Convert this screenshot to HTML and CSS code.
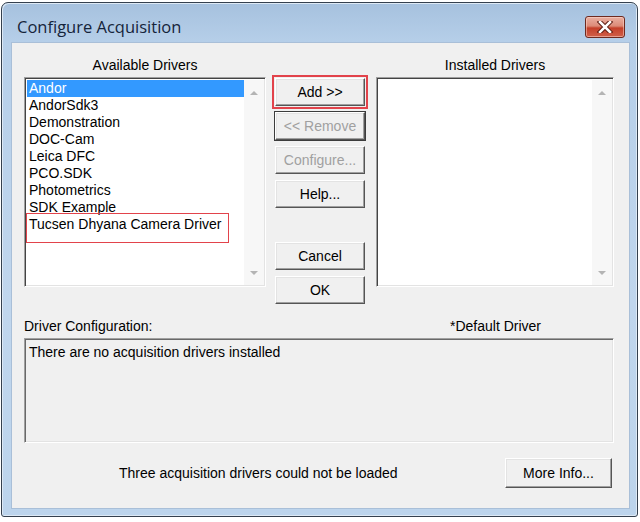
FILE: index.html
```html
<!DOCTYPE html>
<html lang="en">
<head>
    <meta charset="UTF-8">
    <title>Configure Acquisition</title>
    <link rel="stylesheet" href="styles.css">
</head>
<body>
    <div class="window">
        <div class="titlebar">
            <span class="title">Configure Acquisition</span>
            <span class="close-btn">
                <svg width="18" height="12" viewBox="0 0 18 12">
                    <path d="M4 1 L14 11 M14 1 L4 11" stroke="#5a1a10" stroke-width="4.5" stroke-linecap="square"/>
                    <path d="M4 1 L14 11 M14 1 L4 11" stroke="#fff" stroke-width="2.5" stroke-linecap="square"/>
                </svg>
            </span>
        </div>

        <div class="client">
            <div class="top-row">
                <div class="col-left">
                    <div class="group-label">Available Drivers</div>
                    <div class="listbox">
                        <ul class="items">
                            <li class="selected">Andor</li>
                            <li>AndorSdk3</li>
                            <li>Demonstration</li>
                            <li>DOC-Cam</li>
                            <li>Leica DFC</li>
                            <li>PCO.SDK</li>
                            <li>Photometrics</li>
                            <li>SDK Example</li>
                            <li>Tucsen Dhyana Camera Driver</li>
                        </ul>
                        <span class="mark"></span>
                        <div class="scrollbar">
                            <span class="arrow-up"></span>
                            <span class="arrow-down"></span>
                        </div>
                    </div>
                </div>

                <div class="buttons">
                    <button class="btn marked">Add &gt;&gt;</button>
                    <button class="btn focus" disabled>&lt;&lt; Remove</button>
                    <button class="btn" disabled>Configure...</button>
                    <button class="btn">Help...</button>
                    <button class="btn spaced">Cancel</button>
                    <button class="btn">OK</button>
                </div>

                <div class="col-right">
                    <div class="group-label">Installed Drivers</div>
                    <div class="listbox">
                        <ul class="items"></ul>
                        <div class="scrollbar">
                            <span class="arrow-up"></span>
                            <span class="arrow-down"></span>
                        </div>
                    </div>
                </div>
            </div>

            <div class="config-labels">
                <span>Driver Configuration:</span>
                <span>*Default Driver</span>
            </div>
            <div class="config-box">There are no acquisition drivers installed</div>

            <div class="footer">
                <span class="status">Three acquisition drivers could not be loaded</span>
                <button class="btn more">More Info...</button>
            </div>
        </div>
    </div>
</body>
</html>
```

FILE: styles.css
```css
body {
    margin: 0;
    background-color: #fff;
    font-family: 'Liberation Sans', Arial, sans-serif;
    font-size: 14px;
    color: #000;
}

.window {
    width: 635px;
    height: 513px;
    margin: 2px 0 0 1px;
    border: 1px solid #34404e;
    border-radius: 7px 7px 3px 3px;
    background: linear-gradient(to bottom, #a6c1de 0px, #b6cfe9 40px, #c0d6ed 300px, #bcd4ec 100%);
    box-shadow: inset 1px 1px 0 #dde9f5, inset -1px -1px 0 #dde9f5;
    display: flex;
    flex-direction: column;
}

.titlebar {
    height: 40px;
    display: flex;
    align-items: flex-start;
    padding-left: 15px;
}

.title {
    font-family: 'Open Sans', 'Noto Sans', sans-serif;
    font-size: 16.5px;
    color: #15243a;
    margin-top: 13px;
    line-height: 22px;
}

.close-btn {
    margin-left: auto;
    margin-right: 12px;
    margin-top: 13px;
    width: 38px;
    height: 20px;
    border: 1px solid #6e2a20;
    border-radius: 3px;
    background: linear-gradient(to bottom, #eab0a2 0%, #dc8b78 45%, #c4402a 55%, #d0604a 100%);
    box-shadow: inset 0 0 0 1px rgba(255, 220, 210, 0.5);
    display: flex;
    align-items: center;
    justify-content: center;
}

.client {
    flex: 1;
    margin: 0 8px 8px 10px;
    background-color: #f0f0f0;
    box-shadow: 0 0 0 1px #a9bfd8;
    padding: 14px 15px 0 12px;
}

.top-row {
    display: flex;
    align-items: flex-start;
}

.col-left {
    width: 242px;
}

.col-right {
    width: 238px;
    margin-left: 11px;
}

.group-label {
    text-align: center;
    height: 20px;
    line-height: 16px;
}

.listbox {
    position: relative;
    height: 210px;
    box-sizing: border-box;
    background-color: #fff;
    border-top: 1px solid #a0a0a0;
    border-left: 1px solid #a0a0a0;
    border-right: 1px solid #fff;
    border-bottom: 1px solid #fff;
    box-shadow: inset 1px 1px 0 #444, inset -1px -1px 0 #e3e3e3;
    display: flex;
    padding: 2px 1px 1px 2px;
}

.items {
    list-style: none;
    margin: 0;
    padding: 0;
    flex: 1;
}

.items li {
    height: 17px;
    line-height: 16px;
    padding-left: 2px;
}

.items li.selected {
    background-color: #3399ff;
    color: #fff;
}

.mark {
    position: absolute;
    left: 1px;
    top: 135px;
    width: 201px;
    height: 28px;
    border: 1px solid #e2434b;
}

.scrollbar {
    width: 20px;
    background-color: #f7f7f7;
    display: flex;
    flex-direction: column;
    justify-content: space-between;
    align-items: center;
    padding: 11px 0 10px;
}

.arrow-up, .arrow-down {
    width: 0;
    height: 0;
    border-left: 4px solid transparent;
    border-right: 4px solid transparent;
}

.arrow-up {
    border-bottom: 4px solid #b4b4b4;
}

.arrow-down {
    border-top: 4px solid #b4b4b4;
}

.buttons {
    width: 90px;
    margin-left: 9px;
    padding-top: 21px;
    display: flex;
    flex-direction: column;
    gap: 6px;
}

.btn {
    font-family: 'Liberation Sans', Arial, sans-serif;
    font-size: 14px;
    color: #000;
    height: 28px;
    padding: 0;
    background-color: #f0f0f0;
    border: 1px solid;
    border-color: #fff #555 #555 #fff;
    box-shadow: inset -1px -1px 0 #a0a0a0, inset 1px 1px 0 #e3e3e3;
}

.btn:disabled {
    color: #a0a0a0;
}

.btn.focus {
    outline: 1px solid #3c3c3c;
}

.btn.marked {
    outline: 2px solid #e2434b;
    outline-offset: 1px;
}

.btn.spaced {
    margin-top: 28px;
}

.config-labels {
    display: flex;
    justify-content: space-between;
    margin-top: 13px;
    padding-right: 73px;
    height: 18px;
    line-height: 18px;
}

.config-box {
    margin-top: 3px;
    height: 105px;
    box-sizing: border-box;
    border-top: 1px solid #a0a0a0;
    border-left: 1px solid #a0a0a0;
    border-right: 1px solid #fff;
    border-bottom: 1px solid #fff;
    box-shadow: inset 1px 1px 0 #696969, inset -1px -1px 0 #e3e3e3;
    padding: 5px 4px;
    line-height: 16px;
}

.footer {
    display: flex;
    align-items: center;
    margin-top: 15px;
}

.status {
    margin-left: 95px;
}

.btn.more {
    margin-left: auto;
    margin-right: 2px;
    width: 107px;
    height: 30px;
}
```
